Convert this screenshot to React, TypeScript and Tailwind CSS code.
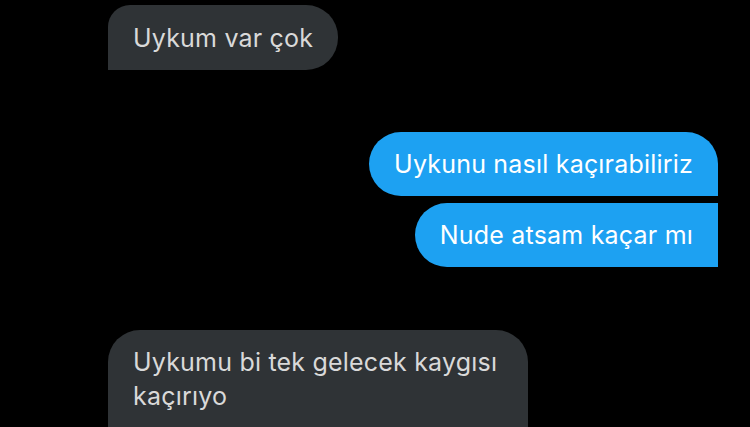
import React from 'react';

const gray = 'bg-[#2f3336] text-[#d9d9d9]';
const blue = 'bg-[#1da1f2] text-white';

const App: React.FC = () => {
  return (
    <div className="w-[750px] h-[427px] overflow-hidden bg-black font-['Inter',sans-serif] text-[25px] leading-[34px] tracking-[0.2px]">
      <div className="flex flex-col pl-[108px] pr-[32px] pt-[5px]">
        <div className="self-start">
          <div className={`${gray} px-[25px] pt-[15.5px] pb-[15.5px] rounded-tl-[22px] rounded-tr-[32px] rounded-br-[32px] rounded-bl-none`}>
            Uykum var çok
          </div>
        </div>

        <div className="mt-[62px] flex flex-col items-end gap-[7px]">
          <div className={`${blue} px-[25px] py-[15px] rounded-l-[32px] rounded-tr-[32px] rounded-br-none`}>
            Uykunu nasıl kaçırabiliriz
          </div>
          <div className={`${blue} px-[25px] py-[15px] rounded-l-[32px] rounded-r-none`}>
            Nude atsam kaçar mı
          </div>
        </div>

        <div className="mt-[63px] self-start max-w-[420px]">
          <div className={`${gray} px-[25px] pt-[15px] pb-[16px] rounded-t-[32px]`}>
            Uykumu bi tek gelecek kaygısı kaçırıyo
          </div>
        </div>
      </div>
    </div>
  );
};

export default App;
